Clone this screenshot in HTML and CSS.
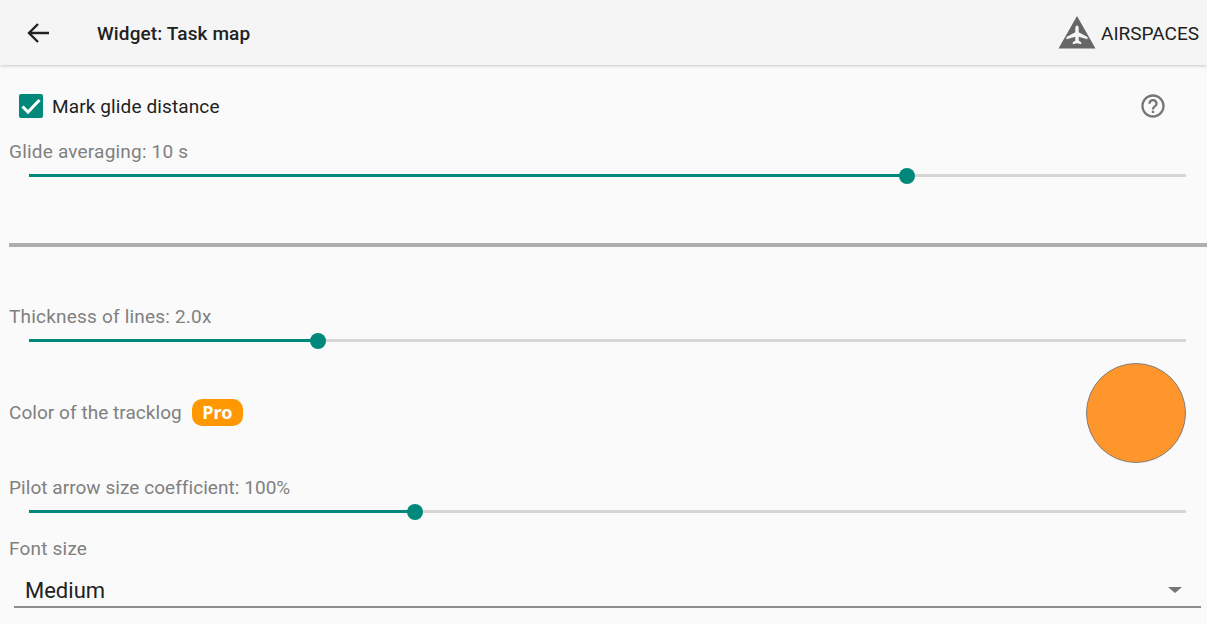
FILE: index.html
```html
<!DOCTYPE html>
<html lang="en">
<head>
  <meta charset="UTF-8" />
  <title>Widget: Task map</title>
  <link rel="stylesheet" href="styles.css">
</head>
<body>
  <header class="toolbar">
    <button class="back" aria-label="Back">
      <svg width="24" height="24" viewBox="0 0 24 24"><path d="M23 12H3M12 3l-9 9 9 9" fill="none" stroke="#212121" stroke-width="2.400"/></svg>
    </button>
    <h1 class="title">Widget: Task map</h1>
    <div class="brand">
      <svg width="38" height="33" viewBox="0 0 38 33">
        <path d="M19 0 L37.500 32.500 H0.500 Z" fill="#666"/>
        <path d="M19 9.500c1 0 1.700 1.200 1.700 2.600v4.200l8.800 4.700v2.300l-8.800-2.600v3.900l2.600 2v1.700L19 27.200l-4.300 1.100v-1.700l2.600-2v-3.900l-8.800 2.600v-2.300l8.800-4.700v-4.200c0-1.400.7-2.600 1.700-2.600z" fill="#f5f5f5"/>
      </svg>
      <span>AIRSPACES</span>
    </div>
  </header>

  <main class="content">
    <div class="check-row">
      <span class="checkbox">
        <svg width="24" height="24" viewBox="0 0 24 24"><path d="M3.500 12.500l5.500 5.500 11.500-12" fill="none" stroke="#fff" stroke-width="3"/></svg>
      </span>
      <span class="check-label">Mark glide distance</span>
      <svg class="help" width="28" height="28" viewBox="0 0 24 24"><path d="M11 18h2v-2h-2v2zm1-16C6.480 2 2 6.480 2 12s4.480 10 10 10 10-4.480 10-10S17.520 2 12 2zm0 18c-4.410 0-8-3.590-8-8s3.590-8 8-8 8 3.590 8 8-3.590 8-8 8zm0-14c-2.210 0-4 1.790-4 4h2c0-1.100.9-2 2-2s2 .9 2 2c0 2-3 1.750-3 5h2c0-2.250 3-2.500 3-5 0-2.210-1.790-4-4-4z" fill="#757575"/></svg>
    </div>

    <div class="setting glide">
      <label class="label">Glide averaging: 10 s</label>
      <div class="slider">
        <div class="fill" style="width: 75.9%"></div><div class="thumb"></div><div class="rest"></div>
      </div>
    </div>

    <hr class="divider">

    <div class="setting thickness">
      <label class="label">Thickness of lines: 2.0x</label>
      <div class="slider">
        <div class="fill" style="width: 25%"></div><div class="thumb"></div><div class="rest"></div>
      </div>
    </div>

    <div class="color-row">
      <span class="label tight">Color of the tracklog</span>
      <span class="pro">Pro</span>
      <span class="swatch"></span>
    </div>

    <div class="setting pilot">
      <label class="label tight">Pilot arrow size coefficient: 100%</label>
      <div class="slider">
        <div class="fill" style="width: 33.4%"></div><div class="thumb"></div><div class="rest"></div>
      </div>
    </div>

    <div class="font-size">
      <label class="label">Font size</label>
      <div class="select">
        <span>Medium</span>
        <span class="caret"></span>
      </div>
    </div>
  </main>
</body>
</html>
```

FILE: styles.css
```css
html, body {
  height: 100%;
}
body {
  font-family: Roboto, sans-serif;
  background: #fafafa;
  color: #212121;
  margin: 0;
  overflow: hidden;
}
.toolbar {
  display: flex;
  align-items: center;
  height: 65px;
  background: #f5f5f5;
  box-shadow: 0 1px 3px rgba(0, 0, 0, 0.2);
  padding: 0 8px 0 26px;
}
.back {
  display: flex;
  background: none;
  border: none;
  padding: 0;
  margin-right: 47px;
}
.title {
  flex: 1;
  margin: 0;
  padding-top: 2px;
  font-size: 19px;
  font-weight: 500;
  letter-spacing: 0.12px;
}
.brand {
  display: flex;
  align-items: center;
  gap: 5px;
  font-size: 19px;
  font-weight: 400;
}
.brand span {
  padding-top: 2px;
}
.content {
  padding-left: 9px;
}
.check-row {
  display: flex;
  align-items: center;
  height: 24px;
  margin-top: 29px;
  padding-left: 10px;
  padding-right: 40px;
}
.checkbox {
  display: flex;
  width: 24px;
  height: 24px;
  background: #00897b;
  border-radius: 2px;
  margin-right: 9px;
}
.check-label {
  flex: 1;
  font-size: 19px;
  letter-spacing: 0.12px;
  color: #212121;
}
.label {
  font-size: 19px;
  letter-spacing: 0.2px;
  color: #808080;
  line-height: 22px;
}
.label.tight {
  letter-spacing: 0.05px;
}
.setting .label {
  display: block;
}
.glide {
  margin-top: 23px;
}
.slider {
  display: flex;
  align-items: center;
  height: 16px;
  margin: 5px 21px 0 20px;
}
.fill {
  height: 3px;
  margin-bottom: 1px;
  background: #00897b;
}
.thumb {
  flex: none;
  width: 16px;
  height: 16px;
  margin: 0 -8px;
  border-radius: 50%;
  background: #00897b;
  position: relative;
}
.rest {
  flex: 1;
  height: 3px;
  margin-bottom: 1px;
  background: #d6d6d6;
}
.divider {
  height: 4px;
  border: none;
  margin: 59px 0 0;
  background: #aeaeae;
}
.thickness {
  margin-top: 59px;
}
.color-row {
  display: flex;
  align-items: center;
  height: 100px;
  margin-top: 14px;
  padding-right: 21px;
}
.pro {
  margin-left: 10px;
  margin-bottom: 2px;
  padding: 0 10.5px;
  height: 27px;
  line-height: 27px;
  border-radius: 10px;
  background: #ff9800;
  color: #fff;
  font-family: "Noto Sans", sans-serif;
  font-size: 18px;
  font-weight: 700;
}
.swatch {
  margin-left: auto;
  width: 98px;
  height: 98px;
  border: 1px solid #808080;
  border-radius: 50%;
  background: #ff962c;
}
.pilot {
  margin-top: 14px;
}
.font-size {
  margin-top: 18px;
}
.font-size .label {
  display: block;
}
.select {
  display: flex;
  align-items: center;
  justify-content: space-between;
  height: 32px;
  margin: 9px 6px 0 5px;
  padding: 5px 19px 0 11px;
  border-bottom: 2px solid #8c8c8c;
  font-size: 22px;
  color: #212121;
}
.caret {
  width: 0;
  height: 0;
  border-left: 7px solid transparent;
  border-right: 7px solid transparent;
  border-top: 6px solid #757575;
}
```
